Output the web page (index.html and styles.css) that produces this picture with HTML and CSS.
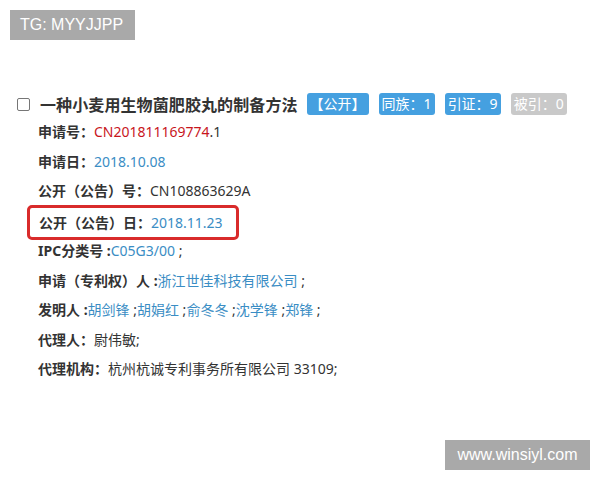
FILE: index.html
```html
<!DOCTYPE html>
<html lang="zh">
<head>
<meta charset="utf-8">
<link rel="stylesheet" href="styles.css">
</head>
<body>
<div class="tag">TG: MYYJJPP</div>
<div class="record">
  <div class="title-row">
    <span class="check"></span>
    <h1 class="title">一种小麦用生物菌肥胶丸的制备方法</h1>
    <span class="badge">【公开】</span>
    <span class="badge">同族：1</span>
    <span class="badge">引证：9</span>
    <span class="badge muted">被引：0</span>
  </div>
  <div class="rows">
    <div class="row"><b>申请号：</b><span class="red">CN201811169774</span>.1</div>
    <div class="row"><b>申请日：</b><span class="blue">2018.10.08</span></div>
    <div class="row"><b>公开（公告）号：</b>CN108863629A</div>
    <div class="row boxed"><b>公开（公告）日：</b><span class="blue">2018.11.23</span></div>
    <div class="row"><b>IPC分类号 :</b><span class="blue">C05G3/00</span> ;</div>
    <div class="row"><b>申请（专利权）人 :</b><span class="blue">浙江世佳科技有限公司</span> ;</div>
    <div class="row"><b>发明人 :</b><span class="blue">胡剑锋</span> ;<span class="blue">胡娟红</span> ;<span class="blue">俞冬冬</span> ;<span class="blue">沈学锋</span> ;<span class="blue">郑锋</span> ;</div>
    <div class="row"><b>代理人：</b>尉伟敏;</div>
    <div class="row"><b>代理机构：</b>杭州杭诚专利事务所有限公司 33109;</div>
  </div>
</div>
<div class="mark">www.winsiyl.com</div>
</body>
</html>
```

FILE: styles.css
```css
html, body {
  margin: 0;
  padding: 0;
  background: #fff;
  width: 600px;
  height: 480px;
  overflow: hidden;
  font-family: "Noto Sans", "Noto Sans CJK SC", sans-serif;
  color: #333;
}
body {
  position: relative;
}
.tag {
  margin: 10px 0 0 10px;
  width: 125px;
  height: 30px;
  background: #a9a9a9;
  color: #fff;
  font-family: "Liberation Sans", "Noto Sans CJK SC", sans-serif;
  font-size: 16px;
  line-height: 30px;
  box-sizing: border-box;
  padding-left: 10px;
}
.record {
  padding: 52px 0 0 17px;
}
.title-row {
  display: flex;
  align-items: center;
  height: 24px;
}
.check {
  width: 11px;
  height: 11px;
  border: 1px solid #767676;
  border-radius: 2px;
  margin-right: 10px;
  flex: none;
}
.title {
  margin: 0 9px 0 0;
  font-size: 16px;
  font-weight: bold;
  color: #333;
  letter-spacing: 0.1px;
  font-family: "Noto Sans CJK SC", sans-serif;
}
.badge {
  height: 22px;
  line-height: 22px;
  background: #45a0e0;
  color: #fff;
  border-radius: 3px;
  font-size: 14px;
  padding: 0 3px;
  margin-right: 10px;
  font-family: "Noto Sans", "Noto Sans CJK SC", sans-serif;
  white-space: nowrap;
}
.badge.muted {
  background: #c9c9c9;
}
.rows {
  display: flex;
  flex-direction: column;
  padding-left: 21px;
  margin-top: 1px;
}
.row {
  height: 29.5px;
  line-height: 29.5px;
  font-size: 14px;
  color: #333;
  white-space: nowrap;
}
.row b {
  font-weight: bold;
  color: #333;
}
.red { color: #c8161d; }
.blue { color: #3a8dc4; }
.boxed {
  align-self: flex-start;
  margin-left: -11px;
  padding: 0 13px 0 9px;
  border: 3px solid #d92b2b;
  border-radius: 5px;
  height: 29px;
  line-height: 29px;
  margin-top: -1px;
  margin-bottom: -3.5px;
}
.mark {
  position: absolute;
  left: 445px;
  top: 440px;
  width: 145px;
  height: 30px;
  background: #a9a9a9;
  color: #fff;
  font-family: "Liberation Sans", sans-serif;
  font-size: 16px;
  line-height: 30px;
  text-align: center;
}
```
